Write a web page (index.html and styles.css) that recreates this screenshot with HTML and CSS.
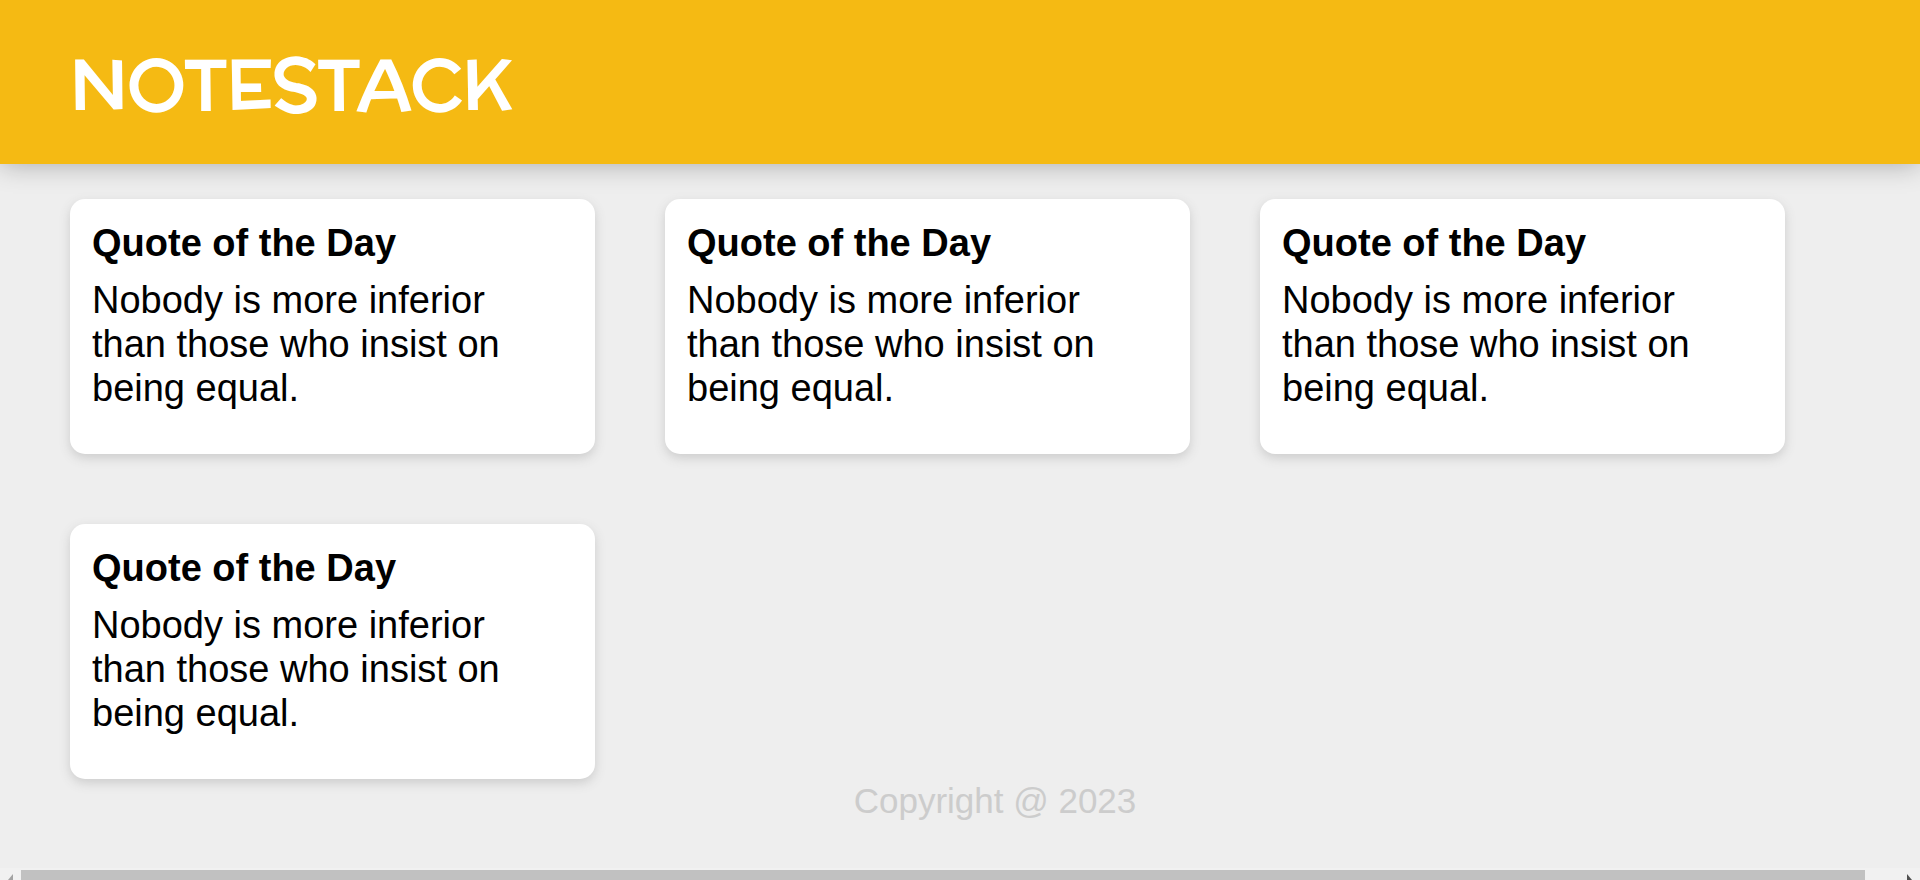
FILE: index.html
```html
<!DOCTYPE html>
<html lang="en">
<head>
<meta charset="utf-8">
<meta name="viewport" content="width=device-width, initial-scale=1">
<title>NoteStack</title>
<link rel="stylesheet" href="styles.css">
</head>
<body>
<header class="header"><h1 class="brand">NOTESTACK</h1></header>
<main class="notes">
  <article class="note"><h2 class="note-title">Quote of the Day</h2><p class="note-text">Nobody is more inferior than those who insist on being equal.</p></article>
  <article class="note"><h2 class="note-title">Quote of the Day</h2><p class="note-text">Nobody is more inferior than those who insist on being equal.</p></article>
  <article class="note"><h2 class="note-title">Quote of the Day</h2><p class="note-text">Nobody is more inferior than those who insist on being equal.</p></article>
  <article class="note"><h2 class="note-title">Quote of the Day</h2><p class="note-text">Nobody is more inferior than those who insist on being equal.</p></article>
</main>
<footer class="footer"><p class="copyright">Copyright @ 2023</p></footer>
<div class="scrollbar" aria-hidden="true">
  <svg class="arrow" viewBox="0 0 21 12"><path d="M13 6v6H8z" fill="#a3a3a3"/></svg>
  <div class="track"><div class="thumb"></div></div>
  <svg class="arrow" viewBox="0 0 21 12"><path d="M8 6v6h5z" fill="#505050"/></svg>
</div>
</body>
</html>
```
FILE: styles.css
```css
* { box-sizing: border-box; margin: 0; padding: 0; }
body {
  display: flex;
  flex-direction: column;
  min-height: 100vh;
  background: #eee;
  color: #000;
  font-family: "Liberation Sans", Arial, sans-serif;
}
.header {
  padding: 34px 70px 30px;
  background: #f5ba13;
  box-shadow: 0 0 26px rgba(0, 0, 0, 0.3);
}
.brand {
  color: #fff;
  font-family: "McLaren", "Comic Sans MS", cursive;
  font-size: 70px;
  font-weight: 400;
  line-height: 100px;
  -webkit-text-stroke: 2px #fff;
  stroke-linejoin: round;
}
.notes {
  display: flex;
  flex-wrap: wrap;
  gap: 70px;
  padding: 35px 0 0 70px;
}
.note {
  width: 525px;
  padding: 22px 35px 22px 22px;
  border-radius: 15px;
  background: #fff;
  box-shadow: 0 4px 11px #ccc;
}
.note-title {
  margin-bottom: 13px;
  font-size: 38px;
  line-height: 44px;
}
.note-text {
  margin-bottom: 22px;
  font-size: 38px;
  line-height: 44px;
}
.footer {
  padding: 2px 0 0 70px;
  text-align: center;
}
.copyright {
  color: #ccc;
  font-size: 35px;
  line-height: 40px;
}
.scrollbar {
  display: flex;
  height: 12px;
  margin-top: auto;
  background: #f1f1f1;
  overflow: hidden;
}
.arrow {
  flex: none;
  width: 21px;
  height: 12px;
}
.track {
  flex: 1;
  padding: 2px 34px 0 0;
}
.thumb {
  height: 10px;
  background: #c1c1c1;
}
```
